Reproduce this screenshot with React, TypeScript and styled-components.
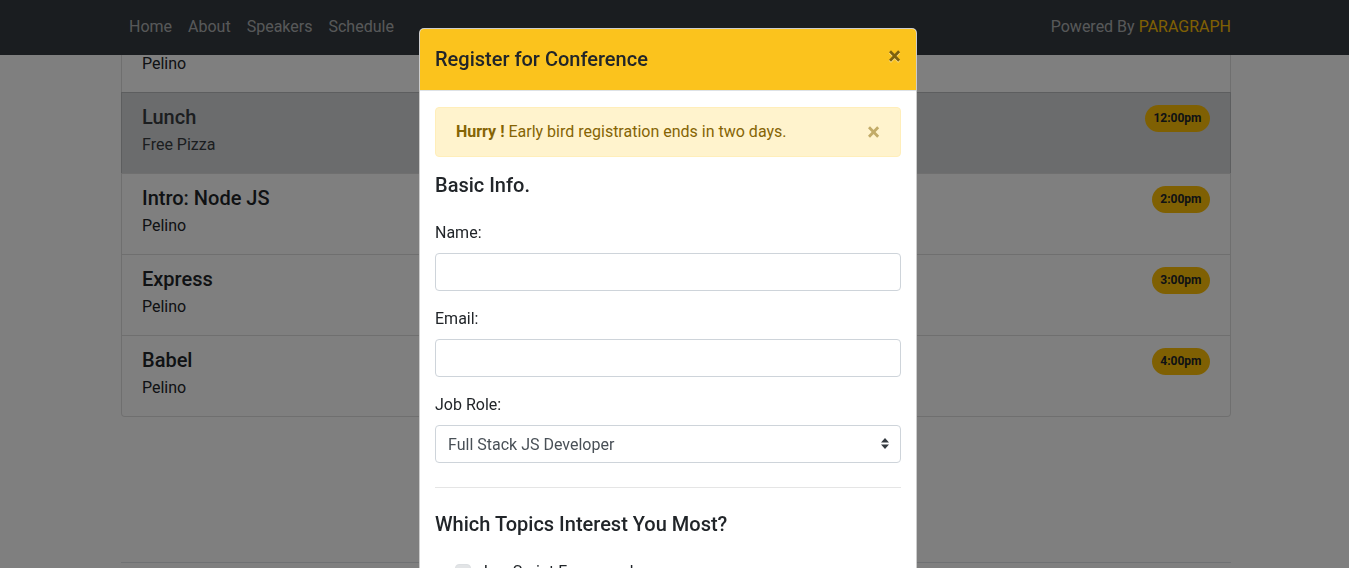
import React from "react";
import styled, { createGlobalStyle } from "styled-components";

const GlobalStyle = createGlobalStyle`
  html, body { margin: 0; padding: 0; }
  body {
    font-family: Roboto, "Liberation Sans", Arial, sans-serif;
    font-size: 16px;
    line-height: 1.5;
    color: #212529;
    background: #fff;
    overflow: hidden;
    height: 568px;
  }
  * { box-sizing: border-box; }
`;

const Shell = styled.div`
  padding-left: 3px;
`;

const Container = styled.div`
  width: 1110px;
  margin: 0 auto;
`;

const NavBar = styled.nav`
  position: fixed;
  top: 0;
  left: 0;
  right: 0;
  height: 55px;
  background: #343a40;
  padding: 7px 0 0 3px;
  z-index: 1030;
`;

const NavInner = styled(Container)`
  display: flex;
  align-items: center;
  justify-content: space-between;
`;

const NavLinks = styled.div`
  display: flex;
`;

const NavLink = styled.a`
  display: block;
  padding: 8px 8px;
  line-height: 24px;
  color: rgba(255, 255, 255, 0.62);
  text-decoration: none;
`;

const Powered = styled.span`
  color: rgba(255, 255, 255, 0.62);
  line-height: 24px;
`;

const Brand = styled.span`
  color: #ffc107;
`;

const Main = styled(Container)`
  padding-top: 11px;
`;

const ListGroup = styled.div`
  display: flex;
  flex-direction: column;
  border-radius: 4px;
`;

const ListItem = styled.div<{ $active?: boolean }>`
  padding: 12px 20px;
  border: 1px solid rgba(0, 0, 0, 0.125);
  margin-bottom: -1px;
  background: ${(p) => (p.$active ? "#d6d8db" : "#fff")};
  color: ${(p) => (p.$active ? "#383d41" : "#212529")};
  &:first-child { border-top-left-radius: 4px; border-top-right-radius: 4px; }
  &:last-child { border-bottom-left-radius: 4px; border-bottom-right-radius: 4px; margin-bottom: 0; }
`;

const ItemHead = styled.div`
  display: flex;
  justify-content: space-between;
  align-items: flex-start;
`;

const ItemTitle = styled.h5`
  margin: 0 0 4px;
  font-size: 20px;
  font-weight: 500;
  line-height: 1.2;
`;

const ItemText = styled.p`
  margin: 0 0 4px;
`;

const TimeBadge = styled.span`
  display: inline-block;
  height: 27px;
  line-height: 27px;
  padding: 0 8.5px;
  border-radius: 14px;
  background: #ffc107;
  color: #212529;
  font-size: 12px;
  font-weight: 700;
`;

const Footer = styled.footer`
  margin-top: 145px;
  border-top: 1px solid #dee2e6;
  height: 40px;
`;

const Backdrop = styled.div`
  position: fixed;
  inset: 0;
  background: rgba(0, 0, 0, 0.5);
  z-index: 1040;
`;

const Modal = styled.div`
  position: fixed;
  top: 28px;
  left: 419px;
  width: 498px;
  z-index: 1050;
  background: #fff;
  border: 1px solid rgba(0, 0, 0, 0.2);
  border-radius: 5px;
`;

const ModalHeader = styled.div`
  display: flex;
  align-items: flex-start;
  justify-content: space-between;
  padding: 15px 15px 16px;
  background: #fbc31d;
  border-bottom: 1px solid #dee2e6;
  border-top-left-radius: 4px;
  border-top-right-radius: 4px;
`;

const ModalTitle = styled.h5`
  margin: 0;
  font-size: 20px;
  font-weight: 500;
  line-height: 30px;
  color: #212529;
`;

const CloseButton = styled.button`
  padding: 16px;
  margin: -16px -16px -16px auto;
  background: transparent;
  border: 0;
  font-family: inherit;
  font-size: 24px;
  font-weight: 700;
  line-height: 1;
  color: #000;
  opacity: 0.5;
  text-shadow: 0 1px 0 #fff;
  cursor: pointer;
`;

const ModalBody = styled.div`
  padding: 16px 15px;
`;

const Alert = styled.div`
  position: relative;
  margin-bottom: 16px;
  padding: 12px 56px 12px 20px;
  border: 1px solid #ffeeba;
  border-radius: 4px;
  background: #fff3cd;
  color: #856404;
  line-height: 24px;
`;

const AlertClose = styled.button`
  position: absolute;
  top: 0;
  right: 0;
  padding: 12px 20px;
  background: transparent;
  border: 0;
  font-family: inherit;
  font-size: 24px;
  font-weight: 700;
  line-height: 24px;
  color: #856404;
  opacity: 0.5;
  cursor: pointer;
`;

const SectionTitle = styled.h5`
  margin: 0 0 24px;
  font-size: 20px;
  font-weight: 500;
  line-height: 24px;
`;

const FormGroup = styled.div`
  margin-bottom: 16px;
`;

const Label = styled.label`
  display: block;
  margin-bottom: 8px;
  line-height: 24px;
`;

const Input = styled.input`
  display: block;
  width: 100%;
  height: 38px;
  padding: 6px 12px;
  font-family: inherit;
  font-size: 16px;
  color: #495057;
  background: #fff;
  border: 1px solid #ced4da;
  border-radius: 4px;
  outline: none;
`;

const SelectWrap = styled.div`
  position: relative;
`;

const Select = styled.select`
  display: block;
  width: 100%;
  height: 38px;
  padding: 6px 36px 6px 12px;
  font-family: inherit;
  font-size: 16px;
  color: #495057;
  background: #fff;
  border: 1px solid #ced4da;
  border-radius: 4px;
  appearance: none;
  outline: none;
`;

const SelectArrows = styled.svg`
  position: absolute;
  right: 12px;
  top: 13px;
  pointer-events: none;
`;

const Divider = styled.hr`
  margin: 24px 0 24px;
  border: 0;
  border-top: 1px solid rgba(0, 0, 0, 0.1);
`;

const CheckRow = styled.div`
  position: relative;
  margin-left: 20px;
  padding-left: 24px;
  line-height: 24px;
`;

const CheckBox = styled.span`
  position: absolute;
  left: 0;
  top: 4px;
  width: 16px;
  height: 16px;
  border-radius: 4px;
  background: #e2e4e6;
  border: 1px solid #dcdfe2;
`;

const sessions = [
  { title: "Intro: React", text: "Pelino", time: "11:00am" },
  { title: "Lunch", text: "Free Pizza", time: "12:00pm", active: true },
  { title: "Intro: Node JS", text: "Pelino", time: "2:00pm" },
  { title: "Express", text: "Pelino", time: "3:00pm" },
  { title: "Babel", text: "Pelino", time: "4:00pm" },
];

export default function App() {
  return (
    <Shell>
      <GlobalStyle />
      <NavBar>
        <NavInner>
          <NavLinks>
            <NavLink href="#">Home</NavLink>
            <NavLink href="#">About</NavLink>
            <NavLink href="#">Speakers</NavLink>
            <NavLink href="#">Schedule</NavLink>
          </NavLinks>
          <Powered>
            Powered By <Brand>PARAGRAPH</Brand>
          </Powered>
        </NavInner>
      </NavBar>

      <Main>
        <ListGroup>
          {sessions.map((s) => (
            <ListItem key={s.title} $active={s.active}>
              <ItemHead>
                <ItemTitle>{s.title}</ItemTitle>
                <TimeBadge>{s.time}</TimeBadge>
              </ItemHead>
              <ItemText>{s.text}</ItemText>
            </ListItem>
          ))}
        </ListGroup>
        <Footer />
      </Main>

      <Backdrop />

      <Modal>
        <ModalHeader>
          <ModalTitle>Register for Conference</ModalTitle>
          <CloseButton aria-label="Close">×</CloseButton>
        </ModalHeader>
        <ModalBody>
          <Alert>
            <strong>Hurry !</strong> Early bird registration ends in two days.
            <AlertClose aria-label="Close">×</AlertClose>
          </Alert>
          <SectionTitle>Basic Info.</SectionTitle>
          <FormGroup>
            <Label>Name:</Label>
            <Input type="text" />
          </FormGroup>
          <FormGroup>
            <Label>Email:</Label>
            <Input type="email" />
          </FormGroup>
          <FormGroup>
            <Label>Job Role:</Label>
            <SelectWrap>
              <Select defaultValue="fullstack">
                <option value="fullstack">Full Stack JS Developer</option>
                <option value="frontend">Front End Developer</option>
                <option value="backend">Back End Developer</option>
              </Select>
              <SelectArrows width="8" height="11" viewBox="0 0 8 11">
                <path d="M4 0 L8 4.5 L0 4.5 Z M0 6.5 L8 6.5 L4 11 Z" fill="#343a40" />
              </SelectArrows>
            </SelectWrap>
          </FormGroup>
          <Divider />
          <SectionTitle>Which Topics Interest You Most?</SectionTitle>
          <CheckRow>
            <CheckBox />
            JavaScript Frameworks
          </CheckRow>
        </ModalBody>
      </Modal>
    </Shell>
  );
}
